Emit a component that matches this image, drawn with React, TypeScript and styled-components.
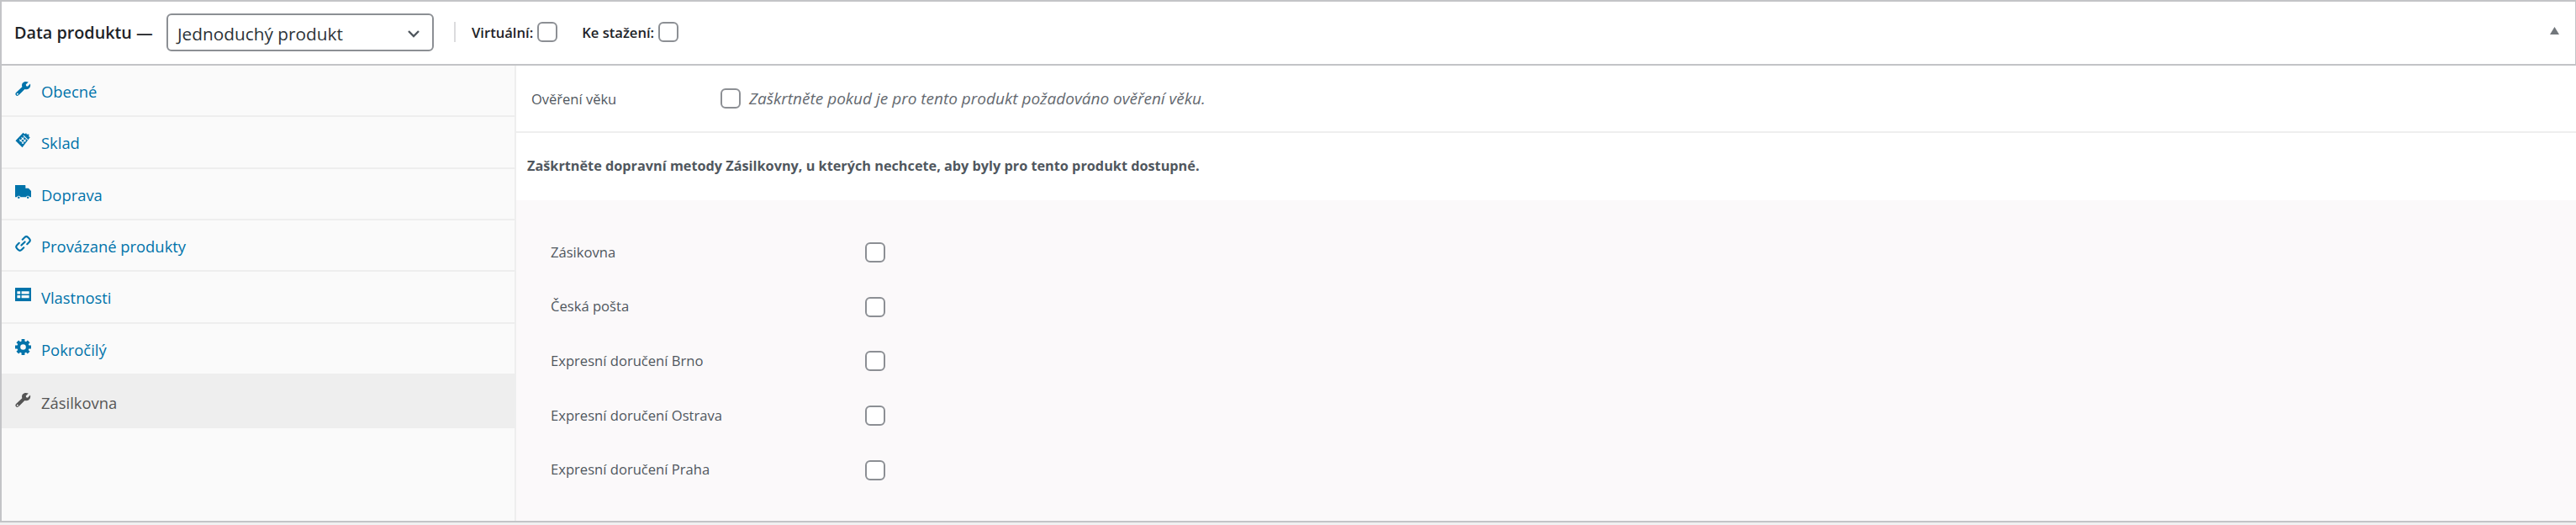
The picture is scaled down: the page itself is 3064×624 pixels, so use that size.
import React from "react";
import styled, { createGlobalStyle } from "styled-components";

const Global = createGlobalStyle`
  html, body { margin: 0; padding: 0; background: #f0f0f1; }
  body { font-family: "Open Sans", "Noto Sans", "Liberation Sans", sans-serif; }
`;

const Box = styled.div`
  width: 3064px;
  height: 621px;
  box-sizing: border-box;
  background: #fff;
  border-top: 2px solid #c3c4c7;
  border-bottom: 2px solid #c3c4c7;
  display: flex;
  flex-direction: column;
`;

const Header = styled.header`
  height: 76px;
  flex: none;
  box-sizing: border-box;
  border-bottom: 2px solid #c3c4c7;
  border-left: 2px solid #c3c4c7;
  border-right: 1px solid #c3c4c7;
  padding-left: 15px;
  display: flex;
  align-items: center;
  color: #1d2327;
`;

const Title = styled.span`
  font-size: 19.8px;
  font-weight: 600;
  width: 181px;
  flex: none;
  margin-top: -2px;
  white-space: nowrap;
`;

const SelectBox = styled.div`
  width: 318px;
  height: 45px;
  flex: none;
  box-sizing: border-box;
  border: 2px solid #8c8f94;
  border-radius: 6px;
  padding: 2px 14px 0 11px;
  margin-top: -1px;
  display: flex;
  align-items: center;
  justify-content: space-between;
  font-size: 20.8px;
  color: #2c3338;
`;

const Separator = styled.span`
  width: 2px;
  height: 24px;
  background: #dcdcde;
  margin: -2px 19px 0 24px;
  flex: none;
`;

const HeaderLabel = styled.label`
  display: flex;
  align-items: center;
  gap: 5px;
  font-size: 16.6px;
  font-weight: 600;
  margin-right: 29px;
  margin-top: -2px;
  white-space: nowrap;
`;

const Check = styled.span`
  display: inline-block;
  width: 24px;
  height: 24px;
  flex: none;
  box-sizing: border-box;
  border: 2px solid #8c8f94;
  border-radius: 6px;
  background: #fff;
`;

const Collapse = styled.svg`
  margin-left: auto;
  margin-right: 19px;
  margin-top: -6px;
  width: 11px;
  height: 9px;
  fill: #72777c;
`;

const Body = styled.div`
  flex: 1;
  display: flex;
  min-height: 0;
`;

const Sidebar = styled.nav`
  width: 614px;
  flex: none;
  box-sizing: border-box;
  background: #fafafa;
  border-left: 2px solid #c3c4c7;
  border-right: 2px solid #eee;
`;

const Tab = styled.a<{ $active?: boolean }>`
  display: flex;
  align-items: center;
  box-sizing: border-box;
  height: ${(p) => (p.$active ? 63 : 61.33)}px;
  padding: 2px 0 0 16px;
  gap: 12px;
  font-size: 18.4px;
  color: ${(p) => (p.$active ? "#555" : "#0073aa")};
  background: ${(p) => (p.$active ? "#eee" : "transparent")};
  border-bottom: ${(p) => (p.$active ? "0" : "2px solid #eee")};
  svg { width: 19px; height: 19px; flex: none; fill: currentColor; margin-top: -6px; }
`;

const Main = styled.main`
  flex: 1;
  min-width: 0;
  display: flex;
  flex-direction: column;
`;

const AgeRow = styled.div`
  height: 80px;
  flex: none;
  box-sizing: border-box;
  border-bottom: 2px solid #eee;
  display: flex;
  align-items: center;
  padding-left: 18px;
  font-size: 16.5px;
  color: #50575e;
`;

const AgeLabel = styled.span`
  width: 225px;
  flex: none;
`;

const AgeHint = styled.em`
  margin-left: 10px;
  font-size: 19px;
  color: #646970;
`;

const Notice = styled.p`
  height: 80px;
  margin: 0;
  padding: 0 0 2px 13px;
  box-sizing: border-box;
  flex: none;
  display: flex;
  align-items: center;
  font-size: 16.25px;
  font-weight: 700;
  color: #50575e;
`;

const Methods = styled.div`
  flex: 1;
  background: #fbf9fa;
  padding-top: 30px;
  box-sizing: border-box;
`;

const MethodRow = styled.div`
  height: 64.6px;
  display: flex;
  align-items: center;
  padding-left: 41px;
  font-size: 16.6px;
  color: #50575e;
`;

const MethodLabel = styled.span`
  width: 374px;
  flex: none;
  margin-top: -2px;
`;

const Wrench = () => (
  <svg viewBox="0 0 20 20"><path d="M16.7 1.6l-3.3 3.2.4 1.9 1.9.4 3.2-3.3c.7 2.5 0 5-2 6.3-1.6 1-3.4 1-4.9.3L4.6 18c-1 1.1-2.6 1.100-3.500.2-1-1-.9-2.600.1-3.500l7.600-7.200c-.6-1.600-.4-3.400.7-4.800 1.500-1.800 4.200-2.300 6.900-1.100h.3zM3 15.500c-.6 0-1 .4-1 1s.4 1 1 1 1-.4 1-1-.4-1-1-1z" fillRule="evenodd"/></svg>
);
const Clip = () => (
  <svg viewBox="0 0 20 20">
    <path d="M10 .8l1.700 1.500 2.200-.9.700 1.500 2.700-.2-.2 2.700 1.600 1.200L9 19.200.5 10.700z"/>
    <path d="M10.400 4.300l5.300 5.300M7.900 6.700l5.300 5.300M5.400 9.100l5.300 5.300M10.900 6.700l-5 5M13.500 9.300l-5 5" stroke="#fafafa" strokeWidth="1.100" fill="none"/>
  </svg>
);
const Truck = () => (
  <svg viewBox="0 0 20 20">
    <path d="M0 1h12.500l.5.500V5h3.700L20 8.500V16h-1.700a2.500 2.500 0 0 0-4.600 0H6.800a2.500 2.500 0 0 0-4.600 0H0z"/>
    <circle cx="4.500" cy="16.500" r="1.300"/><circle cx="16" cy="16.500" r="1.300"/>
  </svg>
);
const LinkIcon = () => (
  <svg viewBox="0 0 20 20"><path fill="none" stroke="currentColor" strokeWidth="2.200" strokeLinecap="round" d="M7.800 12.200l4.400-4.400M9.200 5l2.600-2.600a3.200 3.200 0 0 1 4.500 0l1.300 1.300a3.200 3.200 0 0 1 0 4.500L15 10.800M10.800 15l-2.600 2.600a3.200 3.200 0 0 1-4.500 0l-1.300-1.300a3.200 3.200 0 0 1 0-4.500L5 9.200"/></svg>
);
const TableIcon = () => (
  <svg viewBox="0 0 20 20"><path fillRule="evenodd" d="M0 1h20v17H0zM2.500 5.500v3.500h4V5.500zM8 5.500v3.500h9.500V5.500zM2.500 10.500v3.500h4v-3.500zM8 10.500v3.500h9.500v-3.500z"/></svg>
);
const Gear = () => (
  <svg viewBox="0 0 20 20"><path fillRule="evenodd" d="M8 0h4v2.700l1.700.7 1.900-1.900 2.900 2.900-1.900 1.900.7 1.700H20v4h-2.700l-.7 1.700 1.900 1.900-2.900 2.900-1.900-1.900-1.700.7V20H8v-2.700l-1.700-.7-1.900 1.900-2.900-2.900 1.900-1.900-.7-1.700H0V8h2.700l.7-1.700-1.900-1.900 2.900-2.900 1.900 1.900L8 2.700zM10 6.500a3.500 3.500 0 1 0 0 7 3.500 3.500 0 0 0 0-7z"/></svg>
);

const tabs = [
  { label: "Obecné", icon: <Wrench /> },
  { label: "Sklad", icon: <Clip /> },
  { label: "Doprava", icon: <Truck /> },
  { label: "Provázané produkty", icon: <LinkIcon /> },
  { label: "Vlastnosti", icon: <TableIcon /> },
  { label: "Pokročilý", icon: <Gear /> },
  { label: "Zásilkovna", icon: <Wrench />, active: true },
];

const methods = ["Zásikovna", "Česká pošta", "Expresní doručení Brno", "Expresní doručení Ostrava", "Expresní doručení Praha"];

export default function App() {
  return (
    <>
      <Global />
      <Box>
        <Header>
          <Title>Data produktu —</Title>
          <SelectBox>
            Jednoduchý produkt
            <svg width="16" height="10" viewBox="0 0 16 10"><path d="M2 2l6 6 6-6" fill="none" stroke="#50575e" strokeWidth="2.400" /></svg>
          </SelectBox>
          <Separator />
          <HeaderLabel>Virtuální: <Check /></HeaderLabel>
          <HeaderLabel>Ke stažení: <Check /></HeaderLabel>
          <Collapse viewBox="0 0 11 9"><path d="M5.500 0L11 9H0z" /></Collapse>
        </Header>
        <Body>
          <Sidebar>
            {tabs.map((t) => (
              <Tab key={t.label} $active={t.active}>
                {t.icon}
                {t.label}
              </Tab>
            ))}
          </Sidebar>
          <Main>
            <AgeRow>
              <AgeLabel>Ověření věku</AgeLabel>
              <Check />
              <AgeHint>Zaškrtněte pokud je pro tento produkt požadováno ověření věku.</AgeHint>
            </AgeRow>
            <Notice>Zaškrtněte dopravní metody Zásilkovny, u kterých nechcete, aby byly pro tento produkt dostupné.</Notice>
            <Methods>
              {methods.map((m) => (
                <MethodRow key={m}>
                  <MethodLabel>{m}</MethodLabel>
                  <Check />
                </MethodRow>
              ))}
            </Methods>
          </Main>
        </Body>
      </Box>
    </>
  );
}
